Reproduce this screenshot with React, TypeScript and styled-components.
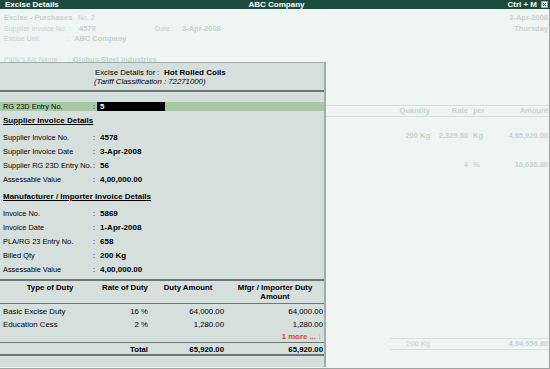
import React from "react";
import styled, { createGlobalStyle } from "styled-components";

const Global = createGlobalStyle`
  html, body { margin: 0; padding: 0; }
  body {
    width: 550px; height: 369px; overflow: hidden;
    font-family: "Liberation Sans", Arial, sans-serif;
    font-size: 8px;
  }
  * { box-sizing: border-box; }
`;

const FAINT = "#c8d2cf";
const FAINT_LINE = "#d6dfdc";
const DARK_LINE = "#6b7875";

const Screen = styled.div`
  position: relative;
  width: 550px;
  height: 369px;
  display: flex;
  flex-direction: column;
  background: #eef5f3;
  color: #000;
`;

const TitleBar = styled.div`
  flex: none;
  height: 9px;
  background: #1c4b3d;
  color: #fff;
  display: grid;
  grid-template-columns: 1fr auto 1fr;
  align-items: center;
  padding: 0 2px 0 5px;
  font-weight: bold;
  font-size: 8px;
  line-height: 9px;
  white-space: nowrap;
`;

const TitleRight = styled.div`
  display: flex;
  justify-content: flex-end;
  align-items: center;
  gap: 4px;
`;

const CloseBox = styled.svg`
  display: block;
  width: 7px;
  height: 7px;
`;

const Body = styled.div`
  flex: 1;
  display: flex;
  flex-direction: column;
  border-right: 1px solid #9aa5a2;
  border-bottom: 1px solid #9aa5a2;
  font-size: 7px;
  color: ${FAINT};
`;

const VoucherHead = styled.div`
  padding: 4px 1px 0 4px;
`;

const VRow = styled.div<{ $mt?: number }>`
  display: flex;
  height: 10.5px;
  line-height: 10.5px;
  white-space: nowrap;
  margin-top: ${(p) => p.$mt ?? 0}px;
`;

const VCell = styled.span<{ $w?: number; $bold?: boolean }>`
  flex: none;
  width: ${(p) => (p.$w ? `${p.$w}px` : "auto")};
  font-weight: ${(p) => (p.$bold ? "bold" : "normal")};
  font-size: ${(p) => (p.$bold ? 7.5 : 7)}px;
`;

const Grow = styled.span`
  flex: 1;
`;

const BgGrid = styled.div<{ $mt?: number; $lines?: boolean }>`
  display: grid;
  grid-template-columns: 1fr 58px 38px 5px 15px 60px;
  padding-right: 1px;
  height: ${(p) => (p.$lines ? 12 : 10)}px;
  line-height: 10px;
  margin-top: ${(p) => p.$mt ?? 0}px;
  border-top: ${(p) => (p.$lines ? `1px solid ${FAINT_LINE}` : "none")};
  border-bottom: ${(p) => (p.$lines ? `1px solid ${FAINT_LINE}` : "none")};
  font-weight: bold;
  font-size: 7.5px;
  white-space: nowrap;
`;

const BgCell = styled.span<{ $right?: boolean; $col?: number }>`
  grid-column: ${(p) => p.$col ?? "auto"};
  text-align: ${(p) => (p.$right ? "right" : "left")};
`;

const BgTotal = styled.div`
  margin-top: auto;
  margin-bottom: 18px;
  margin-left: 390px;
  display: grid;
  grid-template-columns: 40px 1fr auto;
  padding-right: 1px;
  height: 12px;
  line-height: 10px;
  border-top: 1px solid ${FAINT_LINE};
  border-bottom: 1px solid ${FAINT_LINE};
  font-size: 7.5px;
  white-space: nowrap;
`;

const TotalQty = styled.span`
  text-align: right;
`;

const TotalAmt = styled.span`
  grid-column: 3;
  font-weight: bold;
  font-style: italic;
`;

/* ---------- overlay panel ---------- */

const Panel = styled.div`
  position: absolute;
  left: 0;
  top: 62px;
  width: 326px;
  height: 305px;
  background: #d5dfdc;
  border-top: 1px solid #a3adab;
  border-right: 2px solid #a3adab;
  display: flex;
  flex-direction: column;
  font-size: 7.4px;
  color: #000;
  white-space: nowrap;
`;

const PanelHead = styled.div`
  flex: none;
  height: 29px;
  border-bottom: 2px solid ${DARK_LINE};
  display: flex;
  flex-direction: column;
  justify-content: center;
  padding-left: 95px;
  line-height: 9px;
  font-size: 7.8px;
`;

const HeadLine = styled.div`
  display: flex;
`;

const HeadLabel = styled.span`
  width: 62px;
`;

const HeadColon = styled.span`
  width: 7px;
`;

const Italic = styled.div`
  font-style: italic;
  margin-left: -1px;
`;

const EntryRow = styled.div`
  flex: none;
  margin-top: 10px;
  height: 9px;
  line-height: 9px;
  background: #a7c8a2;
  display: grid;
  grid-template-columns: 90px 4px 68px;
  padding-left: 3px;
`;

const EntryBox = styled.span`
  background: #000;
  color: #fff;
  font-weight: bold;
  font-size: 8px;
  padding-left: 3px;
`;

const Section = styled.div`
  flex: none;
  height: 20px;
  line-height: 20px;
  padding-left: 3px;
  font-weight: bold;
  font-size: 8px;
  text-decoration: underline;
  text-underline-offset: 1px;
`;

const Field = styled.div`
  flex: none;
  height: 14px;
  line-height: 14px;
  display: grid;
  grid-template-columns: 90px 7px 1fr;
  padding-left: 3px;
`;

const Value = styled.span`
  font-weight: bold;
  font-size: 8px;
`;

const Divider = styled.div<{ $mt?: number }>`
  flex: none;
  height: 2px;
  margin-top: ${(p) => p.$mt ?? 0}px;
  background: ${DARK_LINE};
`;

const DutyGrid = styled.div<{ $h: number; $line?: "thin" | "thick" }>`
  flex: none;
  display: grid;
  grid-template-columns: 100px 50px 76px 1fr;
  height: ${(p) => p.$h}px;
  line-height: ${(p) => p.$h}px;
  font-size: 7.8px;
  border-bottom: ${(p) =>
    p.$line === "thin" ? `1px solid ${DARK_LINE}` : p.$line === "thick" ? `2px solid ${DARK_LINE}` : "none"};
`;

const DutyHead = styled(DutyGrid)`
  line-height: 9px;
  padding-top: 2px;
  font-weight: bold;
  white-space: normal;
`;

const HeadCell = styled.span`
  text-align: center;
  padding: 0 1px;
`;

const Cell = styled.span<{ $right?: boolean; $bold?: boolean; $pr?: number }>`
  text-align: ${(p) => (p.$right ? "right" : "left")};
  font-weight: ${(p) => (p.$bold ? "bold" : "normal")};
  padding-left: ${(p) => (p.$right ? 0 : 3)}px;
  padding-right: ${(p) => (p.$right ? p.$pr ?? 2 : 0)}px;
`;

const MoreCell = styled.span`
  grid-column: 1 / -1;
  text-align: right;
  padding-right: 2px;
  font-weight: bold;
  color: #e8402e;
`;

const DutyBody = styled.div`
  flex: none;
  padding-top: 1px;
  border-bottom: 1px solid ${DARK_LINE};
`;

const Arrow = styled.span`
  font-weight: normal;
  color: #f08070;
`;

const duties = [
  { type: "Basic Excise Duty", rate: "16 %", amount: "64,000.00", mfgr: "64,000.00" },
  { type: "Education Cess", rate: "2 %", amount: "1,280.00", mfgr: "1,280.00" },
];

const supplier = [
  ["Supplier Invoice No.", "4578"],
  ["Supplier Invoice Date", "3-Apr-2008"],
  ["Supplier RG 23D Entry No.", "56"],
  ["Assessable Value", "4,00,000.00"],
];

const manufacturer = [
  ["Invoice No.", "5869"],
  ["Invoice Date", "1-Apr-2008"],
  ["PLA/RG 23 Entry No.", "658"],
  ["Billed Qty", "200 Kg"],
  ["Assessable Value", "4,00,000.00"],
];

export default function App() {
  return (
    <>
      <Global />
      <Screen>
        <TitleBar>
          <span>Excise Details</span>
          <span>ABC Company</span>
          <TitleRight>
            <span>Ctrl + M</span>
            <CloseBox viewBox="0 0 7 7">
              <rect x="0.5" y="0.5" width="6" height="6" fill="#e9eeec" stroke="#9aa5a2" />
              <path d="M2 2 L5 5 M5 2 L2 5" stroke="#3c4a46" strokeWidth="1" />
            </CloseBox>
          </TitleRight>
        </TitleBar>

        <Body>
          <VoucherHead>
            <VRow>
              <VCell $w={74} $bold>Excise - Purchases</VCell>
              <VCell>No. 2</VCell>
              <Grow />
              <VCell $bold>3-Apr-2008</VCell>
            </VRow>
            <VRow>
              <VCell $w={65}>Supplier Invoice No.</VCell>
              <VCell $w={10}>:</VCell>
              <VCell $w={76} $bold>4578</VCell>
              <VCell $w={16}>Date</VCell>
              <VCell $w={11}>:</VCell>
              <VCell $bold>3-Apr-2008</VCell>
              <Grow />
              <VCell $bold>Thursday</VCell>
            </VRow>
            <VRow>
              <VCell $w={63}>Excise Unit</VCell>
              <VCell $w={7}>:</VCell>
              <VCell $bold>ABC Company</VCell>
            </VRow>
            <VRow $mt={10}>
              <VCell $w={64}>Party's A/c Name</VCell>
              <VCell $w={5}>:</VCell>
              <VCell $bold>Globus Steel Industries</VCell>
            </VRow>
          </VoucherHead>

          <BgGrid $mt={40} $lines>
            <BgCell $col={2} $right>Quantity</BgCell>
            <BgCell $right>Rate</BgCell>
            <BgCell $col={5}>per</BgCell>
            <BgCell $right>Amount</BgCell>
          </BgGrid>
          <BgGrid $mt={14}>
            <BgCell $col={2} $right>200 Kg</BgCell>
            <BgCell $right>2,329.60</BgCell>
            <BgCell $col={5}>Kg</BgCell>
            <BgCell $right>4,65,920.00</BgCell>
          </BgGrid>
          <BgGrid $mt={19}>
            <BgCell $col={3} $right>4</BgCell>
            <BgCell $col={5}>%</BgCell>
            <BgCell $right>18,636.80</BgCell>
          </BgGrid>

          <BgTotal>
            <TotalQty>200 Kg</TotalQty>
            <TotalAmt>4,84,556.80</TotalAmt>
          </BgTotal>
        </Body>

        <Panel>
          <PanelHead>
            <HeadLine>
              <HeadLabel>Excise Details for</HeadLabel>
              <HeadColon>:</HeadColon>
              <Value>Hot Rolled Coils</Value>
            </HeadLine>
            <Italic>(Tariff Classification : 72271000)</Italic>
          </PanelHead>

          <EntryRow>
            <span>RG 23D Entry No.</span>
            <span>:</span>
            <EntryBox>5</EntryBox>
          </EntryRow>

          <Section>Supplier Invoice Details</Section>
          {supplier.map(([l, v]) => (
            <Field key={l}>
              <span>{l}</span>
              <span>:</span>
              <Value>{v}</Value>
            </Field>
          ))}

          <Section>Manufacturer / Importer Invoice Details</Section>
          {manufacturer.map(([l, v]) => (
            <Field key={l + v}>
              <span>{l}</span>
              <span>:</span>
              <Value>{v}</Value>
            </Field>
          ))}

          <Divider $mt={2} />

          <DutyHead $h={23} $line="thin">
            <HeadCell>Type of Duty</HeadCell>
            <HeadCell>Rate of Duty</HeadCell>
            <HeadCell>Duty Amount</HeadCell>
            <HeadCell>Mfgr / Importer Duty Amount</HeadCell>
          </DutyHead>

          <DutyBody>
            {duties.map((d) => (
              <DutyGrid $h={13} key={d.type}>
                <Cell>{d.type}</Cell>
                <Cell $right>{d.rate}</Cell>
                <Cell $right>{d.amount}</Cell>
                <Cell $right $pr={1}>{d.mfgr}</Cell>
              </DutyGrid>
            ))}
            <DutyGrid $h={11}>
              <MoreCell>
                1 more ... <Arrow>↓</Arrow>
              </MoreCell>
            </DutyGrid>
          </DutyBody>

          <DutyGrid $h={13} $line="thick">
            <span />
            <Cell $right $bold>Total</Cell>
            <Cell $right $bold>65,920.00</Cell>
            <Cell $right $bold $pr={1}>65,920.00</Cell>
          </DutyGrid>
        </Panel>
      </Screen>
    </>
  );
}
